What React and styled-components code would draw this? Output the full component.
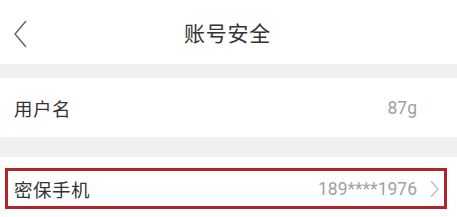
import React from 'react'
import styled, { createGlobalStyle } from 'styled-components'

const Global = createGlobalStyle`
  html, body { margin: 0; padding: 0; background: #fff; }
  body { font-family: Roboto, "Noto Sans CJK SC", sans-serif; }
`

const Page = styled.div`
  width: 457px;
  height: 217px;
  background: #fff;
  overflow: hidden;
`

const Header = styled.div`
  height: 64px;
  display: flex;
  align-items: center;
  position: relative;
  justify-content: center;
`

const BackBtn = styled.div`
  position: absolute;
  left: 12px;
  top: 19px;
  width: 18px;
  height: 29px;
`

const Title = styled.div`
  font-size: 21px;
  color: #333;
  letter-spacing: 0.8px;
  margin-left: -2px;
`

const Gap = styled.div`
  height: ${p => p.h}px;
  background: #f0f0f0;
`

const Row = styled.div`
  height: 59px;
  display: flex;
  align-items: center;
  justify-content: space-between;
  padding: 0 40px 0 14px;
`

const Label = styled.div`
  font-size: 18.5px;
  color: #333;
  letter-spacing: 0.5px;
`

const Value = styled.div`
  font-size: 17.5px;
  color: #a0a0a0;
`

const Highlight = styled.div`
  padding: 11px 10px 8px 5px;
`

const Boxed = styled.div`
  height: 35px;
  border: 3px solid #b3232a;
  display: flex;
  align-items: center;
  justify-content: space-between;
  padding: 0 5px 0 6px;
`

const Right = styled.div`
  display: flex;
  align-items: center;
  gap: 13px;
`

function ChevronLeft() {
  return (
    <svg width="18" height="29" viewBox="0 0 18 29">
      <polyline points="14,2 3,15 14,28" fill="none" stroke="#6a6a6a" strokeWidth="1.5" />
    </svg>
  )
}

function ChevronRight() {
  return (
    <svg width="9" height="18" viewBox="0 0 9 18">
      <polyline points="1,1 8,9 1,17" fill="none" stroke="#bdbdbd" strokeWidth="1.2" />
    </svg>
  )
}

export default function App() {
  return (
    <Page>
      <Global />
      <Header>
        <BackBtn><ChevronLeft /></BackBtn>
        <Title>账号安全</Title>
      </Header>
      <Gap h={14} />
      <Row>
        <Label>用户名</Label>
        <Value>87g</Value>
      </Row>
      <Gap h={20} />
      <Highlight>
        <Boxed>
          <Label>密保手机</Label>
          <Right>
            <Value>189****1976</Value>
            <ChevronRight />
          </Right>
        </Boxed>
      </Highlight>
    </Page>
  )
}
